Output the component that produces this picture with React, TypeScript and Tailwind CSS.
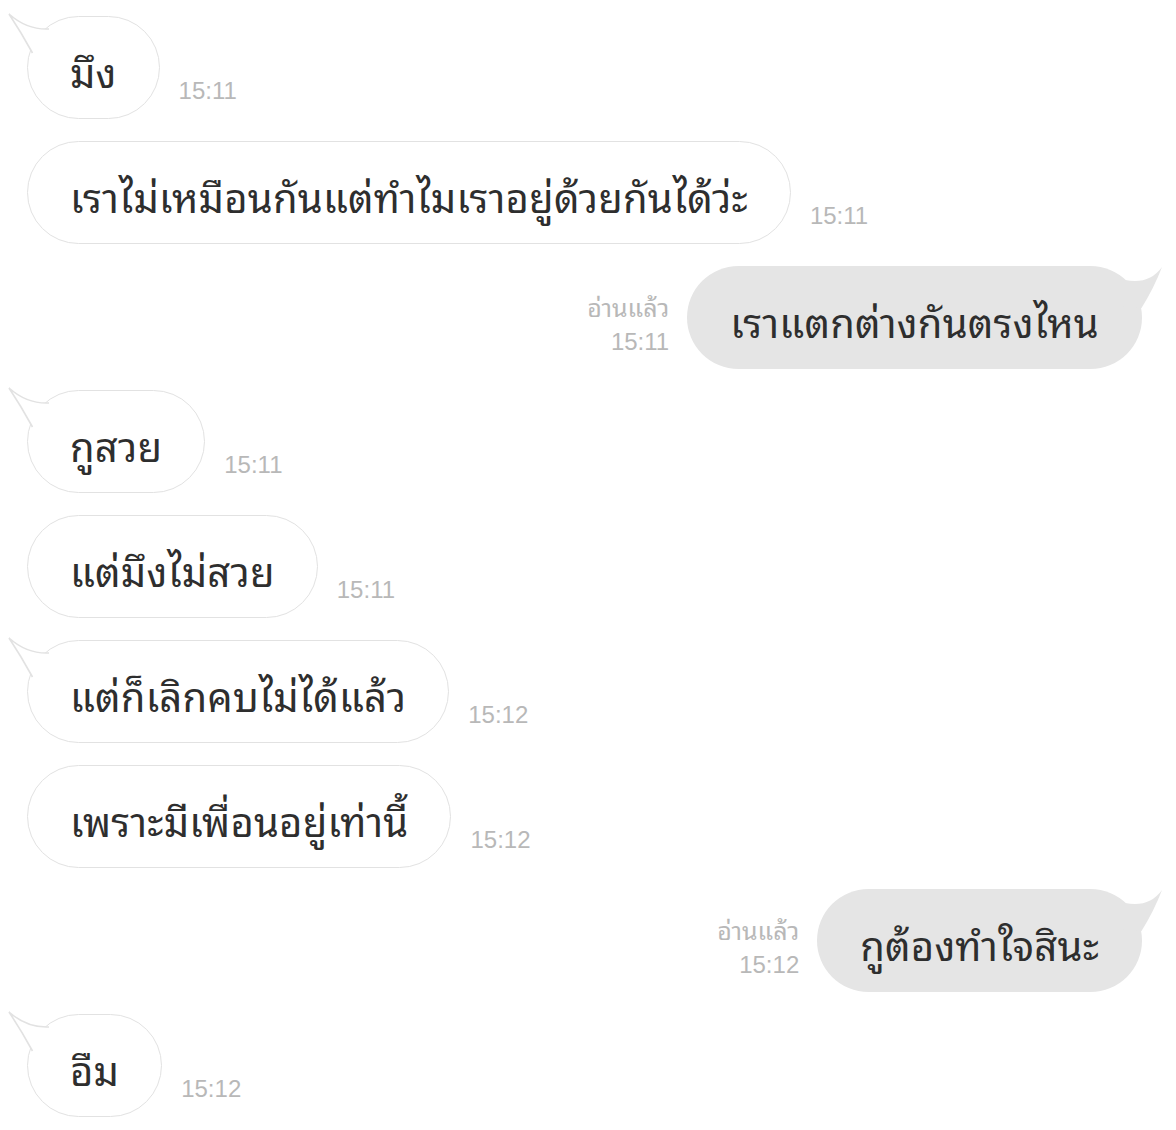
import React from "react";

type Msg = {
  side: "left" | "right";
  text: string;
  time: string;
  tail?: boolean;
};

const messages: Msg[] = [
  { side: "left", text: "มึง", time: "15:11", tail: true },
  { side: "left", text: "เราไม่เหมือนกันแต่ทำไมเราอยู่ด้วยกันได้ว่ะ", time: "15:11" },
  { side: "right", text: "เราแตกต่างกันตรงไหน", time: "15:11", tail: true },
  { side: "left", text: "กูสวย", time: "15:11", tail: true },
  { side: "left", text: "แต่มึงไม่สวย", time: "15:11" },
  { side: "left", text: "แต่ก็เลิกคบไม่ได้แล้ว", time: "15:12", tail: true },
  { side: "left", text: "เพราะมีเพื่อนอยู่เท่านี้", time: "15:12" },
  { side: "right", text: "กูต้องทำใจสินะ", time: "15:12", tail: true },
  { side: "left", text: "อืม", time: "15:12", tail: true },
];

// tail that sticks out of the first bubble in a group
const LeftTail = () => (
  <svg className="absolute -left-[27px] -top-[16px] h-[70px] w-[70px]" viewBox="0 0 70 70">
    <path d="M48 28 Q26 29 8 13 Q20 31 31.5 52 L60 60 Z" fill="#ffffff" />
    <path d="M48 28 Q26 29 8 13 Q20 31 31.5 52" fill="none" stroke="#e2e2e2" strokeWidth="1.6" />
  </svg>
);

const RightTail = () => (
  <svg className="absolute -right-[30px] top-0 h-[70px] w-[90px]" viewBox="0 0 90 70">
    <path d="M43 14 Q67 19 80 1 Q72 22 59.5 42 L30 40 Z" fill="#e5e5e5" />
  </svg>
);

const thai =
  "font-['Noto_Sans_Thai_Looped','Thonburi','Loma','Garuda','Sarabun','Noto_Sans_Thai','Noto_Sans',sans-serif]";

const App = () => {
  return (
    <div className="flex h-[1130px] w-[1176px] flex-col gap-[21.75px] overflow-hidden bg-white pt-[16px]">
      {messages.map((m, i) =>
        m.side === "left" ? (
          <div key={i} className="flex items-end pl-[27px]">
            <div
              className={`relative flex h-[103px] items-center rounded-full border-[1.5px] border-[#e2e2e2] bg-white px-[42px] pt-[5px] text-[40px] tracking-[0.2px] text-[#2e2e2e] ${thai}`}
            >
              {m.text}
              {m.tail && <LeftTail />}
            </div>
            <span className="mb-[16px] ml-[19px] font-['Liberation_Sans',sans-serif] text-[24px] leading-none text-[#b8b8b8]">
              {m.time}
            </span>
          </div>
        ) : (
          <div key={i} className="flex items-end justify-end pr-[34px]">
            <div className="mb-[15px] mr-[18px] flex flex-col items-end text-[#b8b8b8]">
              <span className={`mb-[14px] block h-[20px] text-[25px] leading-[20px] ${thai}`}>อ่านแล้ว</span>
              <span className="block font-['Liberation_Sans',sans-serif] text-[24px] leading-none">{m.time}</span>
            </div>
            <div
              className={`relative flex h-[103px] items-center rounded-full bg-[#e5e5e5] px-[43px] pt-[5px] text-[40px] tracking-[0.2px] text-[#2e2e2e] ${thai}`}
            >
              {m.text}
              {m.tail && <RightTail />}
            </div>
          </div>
        )
      )}
    </div>
  );
};

export default App;
